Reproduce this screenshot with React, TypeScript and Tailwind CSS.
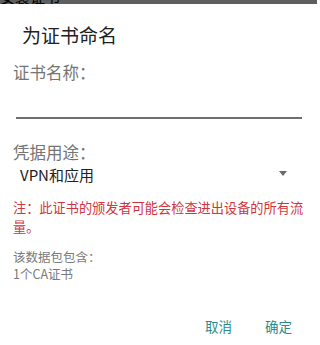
import React from "react";

export default function App() {
  return (
    <div
      className="w-[317px] h-[345px] bg-white overflow-hidden flex flex-col"
      style={{ fontFamily: '"Noto Sans CJK SC", "Noto Sans", sans-serif' }}
    >
      <div className="h-[4px] bg-[#5e5e5e] overflow-hidden shrink-0">
        <div className="text-[15px] leading-[15px] -mt-[11px] text-black pl-0">安装证书</div>
      </div>
      <div className="mt-[19px] pl-[22px] text-[19px] leading-[24px] text-[#212121]">为证书命名</div>
      <div className="mt-[15px] pl-[13px] text-[16.5px] leading-[20px] text-[#757575]">证书名称：</div>
      <div className="ml-[16px] mr-[15px] h-[37px] border-b-2 border-[#6f6f6f]"></div>
      <div className="mt-[23px] pl-[13px] text-[16.5px] leading-[20px] text-[#757575]">凭据用途：</div>
      <div className="mt-[3px] pl-[20px] pr-[30px] flex items-center justify-between h-[20px]">
        <span className="text-[15px] leading-[20px] text-[#212121]">VPN和应用</span>
        <svg width="8" height="5" viewBox="0 0 8 5" className="-mt-[3px]">
          <path d="M0 0 L8 0 L4 5 Z" fill="#6b6b6b" />
        </svg>
      </div>
      <div className="mt-[12.5px] pl-[13px] pr-[12px] text-[13.2px] leading-[19px] text-[#d1343c]">
        注：此证书的颁发者可能会检查进出设备的所有流量。
      </div>
      <div className="mt-[12px] pl-[13px] text-[12.5px] leading-[17px] text-[#7a7a7a]">该数据包包含：</div>
      <div className="pl-[13px] text-[12.5px] leading-[17px] text-[#7a7a7a]">1个CA证书</div>
      <div className="mt-[34.5px] flex justify-end gap-[33px] pr-[25px] text-[13.5px] leading-[20px] text-[#2e8b8b]">
        <span>取消</span>
        <span>确定</span>
      </div>
    </div>
  );
}
